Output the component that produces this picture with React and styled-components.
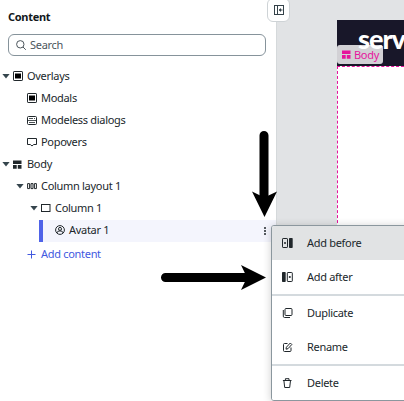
import React from 'react';
import styled, { createGlobalStyle, css } from 'styled-components';

const GlobalStyle = createGlobalStyle`
  * { box-sizing: border-box; }
  body { margin: 0; overflow: hidden; background: #fff; }
`;

const Screen = styled.div`
  position: relative;
  display: flex;
  width: 404px;
  height: 401px;
  overflow: hidden;
  background: #fff;
  color: #20272b;
  font: 11px/22px 'Noto Sans', sans-serif;
  letter-spacing: -0.3px;
`;

const Panel = styled.aside`
  width: 277px;
  flex: none;
  border-right: 1px solid #d5d9db;
`;

const Title = styled.h1`
  margin: 6px 0 0 8px;
  font-size: 11px;
  line-height: 22px;
  font-weight: 700;
  color: #12181b;
`;

const Search = styled.div`
  display: flex;
  align-items: center;
  gap: 4px;
  width: 258px;
  height: 22px;
  margin: 6px 0 10px 8px;
  padding-left: 7px;
  border: 1px solid #86939b;
  border-radius: 6px;
  color: #4c565c;
`;

const Row = styled.div`
  display: flex;
  align-items: center;
  height: 22px;
  padding-bottom: 2px;
  padding-left: ${(p) => p.$indent}px;
  white-space: pre;
  ${(p) => p.$selected && css`
    margin-left: 39px;
    border-left: 4px solid #4f63e8;
    background: #f4f5fd;
  `}
`;

const Caret = styled.span`
  width: 8px;
  height: 5px;
  margin-right: 3px;
  background: #35454d;
  clip-path: polygon(0 0, 100% 0, 50% 100%);
  visibility: ${(p) => (p.$hidden ? 'hidden' : 'visible')};
`;

const RowIcon = styled.span`
  display: flex;
  width: 10px;
  margin-right: 4px;
`;

const MoreDots = styled.span`
  display: flex;
  flex-direction: column;
  gap: 1px;
  margin: 2px 10px 0 auto;
`;

const Dot = styled.i`
  width: 2px;
  height: 2px;
  border-radius: 1px;
  background: #20272b;
`;

const AddContent = styled.div`
  display: flex;
  align-items: center;
  gap: 5px;
  height: 24px;
  padding-left: 27px;
  color: #4259df;
`;

const Canvas = styled.main`
  flex: 1;
  padding: 20px 0 0 60px;
  background: #e1e3e5;
`;

const Header = styled.header`
  position: relative;
  height: 46px;
  background: #181729;
`;

const Logo = styled.span`
  position: absolute;
  z-index: 1;
  left: 21px;
  top: 5px;
  font: 900 27px/28px Lato, sans-serif;
  letter-spacing: -1px;
  color: #fff;
`;

const Badge = styled.div`
  position: absolute;
  left: 0;
  bottom: 2px;
  display: flex;
  align-items: center;
  gap: 3px;
  width: 46px;
  height: 19px;
  padding-left: 5px;
  border-radius: 3px;
  background: #d2d1d5;
  color: #e6149d;
`;

const Page = styled.section`
  height: 336px;
  border-top: 1px dashed #e6149d;
  border-left: 1px dashed #e6149d;
  background: #fff;
`;

const Toggle = styled.button`
  position: absolute;
  left: 267px;
  top: -2px;
  display: grid;
  place-items: center;
  width: 23px;
  height: 24px;
  padding: 0;
  border: 1px solid #ced3d6;
  border-radius: 6px;
  background: #fff;
  color: #35434a;
`;

const Menu = styled.div`
  position: absolute;
  left: 271px;
  top: 225px;
  width: 150px;
  height: 176px;
  border: 1px solid #8b979e;
  border-radius: 3px;
  background: #fff;
  box-shadow: 0 1px 8px rgba(0, 0, 0, 0.2);
  overflow: hidden;
`;

const MenuItem = styled.div`
  display: flex;
  align-items: center;
  gap: 13px;
  height: 34px;
  padding-left: 10px;
  background: ${(p) => (p.$active ? '#e1e3e4' : '#fff')};
`;

const Divider = styled.hr`
  height: 2px;
  margin: 0;
  border: 0;
  background: #d4dade;
`;

const Arrows = styled.svg`
  position: absolute;
  inset: 0;
  pointer-events: none;
`;

const Svg = ({ w = 10, h = 10, children }) => (
  <svg width={w} height={h} viewBox={`0 0 ${w} ${h}`} fill="none" stroke="currentColor" strokeWidth="1">
    {children}
  </svg>
);

const ModalIcon = () => (
  <Svg><rect x=".5" y=".5" width="9" height="9" rx=".6" /><rect x="2" y="2.5" width="6" height="5" fill="#000" stroke="none" /></Svg>
);
const DialogIcon = () => (
  <Svg><rect x=".5" y="1.5" width="9" height="8" rx="1" /><path d="M2 3.5h4M7 3.5h1M1 5.5h8M2 7.5h6" strokeWidth=".8" /></Svg>
);
const PopoverIcon = () => (
  <Svg><path d="M.5 1.5h9v6H6.7L5 9 3.3 7.5H.5z" /></Svg>
);
const BodyIcon = () => (
  <Svg w={9} h={9}><path d="M0 .5h8.5v3.5H0zM0 5h3.7v3.7H0zM4.8 5h3.7v3.7H4.8z" fill="currentColor" stroke="none" /></Svg>
);
const LayoutIcon = () => (
  <Svg><path d="M.6 2.6h2v5h-2zM4 2.6h2v5H4zM7.4 2.6h2v5h-2z" /></Svg>
);
const ColumnIcon = () => <Svg><rect x=".5" y="1.5" width="8.5" height="7" /></Svg>;
const AvatarIcon = () => (
  <Svg><circle cx="5" cy="5" r="4.4" /><circle cx="5" cy="3.9" r="1.5" /><path d="M2.3 8.2V7.4Q2.5 6 4 6h2q1.5 0 1.7 1.4v.8" /></Svg>
);
const SearchIcon = () => (
  <Svg><circle cx="4.3" cy="4.3" r="3.7" /><path d="m7 7 2.8 2.8" /></Svg>
);
const BeforeIcon = () => (
  <Svg w={12} h={12}><rect x=".5" y="1.5" width="5" height="9" rx=".6" /><path d="M2 6h2M3 5v2" /><rect x="7" y="1" width="3.7" height="10" rx=".7" fill="currentColor" stroke="none" /></Svg>
);
const AfterIcon = () => (
  <Svg w={12} h={12}><rect x="0" y="1" width="3.7" height="10" rx=".7" fill="currentColor" stroke="none" /><rect x="5.3" y="1.5" width="5" height="9" rx=".6" /><path d="M6.8 6h2M7.8 5v2" /></Svg>
);
const CopyIcon = () => (
  <Svg w={12} h={12}><rect x="3" y="1.5" width="7" height="7" rx="1" /><path d="M1.3 3v6.2q0 1.3 1.3 1.3H8" /></Svg>
);
const EditIcon = () => (
  <Svg w={12} h={12}><path d="M5.5 2.5h-3q-1 0-1 1v6q0 1 1 1h5.5q1 0 1-1V6.5M4 8.2l.4-2L8.3 2l1.5 1.5L6 7.7z" /></Svg>
);
const TrashIcon = () => (
  <Svg w={12} h={12}><path d="M.9 3.5h8.6M3.4 3.3V1.7H7v1.6M1.9 3.5l.8 7h5l.8-7" /></Svg>
);
const CollapseIcon = () => (
  <Svg><rect x=".5" y=".5" width="9" height="9" /><path d="M3.5.5v9M5 5h3.5" /><path d="M7 3v4L4.8 5z" fill="currentColor" stroke="none" /></Svg>
);

const tree = [
  { label: 'Overlays', indent: 2, Icon: ModalIcon, open: true },
  { label: 'Modals', indent: 16, Icon: ModalIcon },
  { label: 'Modeless dialogs', indent: 16, Icon: DialogIcon },
  { label: 'Popovers', indent: 16, Icon: PopoverIcon },
  { label: 'Body', indent: 2, Icon: BodyIcon, open: true },
  { label: 'Column layout 1', indent: 16, Icon: LayoutIcon, open: true },
  { label: 'Column 1', indent: 30, Icon: ColumnIcon, open: true },
  { label: 'Avatar 1', indent: 1, Icon: AvatarIcon, selected: true },
];

export default function App() {
  return (
    <>
      <GlobalStyle />
      <Screen>
        <Panel>
          <Title>Content</Title>
          <Search><SearchIcon />Search</Search>
          {tree.map(({ label, indent, Icon, open, selected }) => (
            <Row key={label} $indent={indent} $selected={selected}>
              <Caret $hidden={!open} />
              <RowIcon><Icon /></RowIcon>
              {label}
              {selected && <MoreDots><Dot /><Dot /><Dot /></MoreDots>}
            </Row>
          ))}
          <AddContent>
            <Svg w={9} h={9}><path d="M4.5 .5v8M.5 4.5h8" /></Svg>
            Add content
          </AddContent>
        </Panel>
        <Canvas>
          <Header>
            <Logo>serv</Logo>
            <Badge><BodyIcon />Body</Badge>
          </Header>
          <Page />
        </Canvas>
        <Toggle aria-label="Collapse panel"><CollapseIcon /></Toggle>
        <Menu>
          <MenuItem $active><BeforeIcon />Add before</MenuItem>
          <MenuItem><AfterIcon />Add after</MenuItem>
          <Divider />
          <MenuItem><CopyIcon />Duplicate</MenuItem>
          <MenuItem><EditIcon />Rename</MenuItem>
          <Divider />
          <MenuItem><TrashIcon />Delete</MenuItem>
        </Menu>
        <Arrows width="404" height="401" viewBox="0 0 404 401">
          <path d="M264 135.5V200M165.5 277.5H249" stroke="#000" strokeWidth="9" strokeLinecap="round" />
          <path d="M264.5 217 252 191.5l12.3 6 12.7-6zM266 277.5 241 265l6 12.5-6 12.5z" />
        </Arrows>
      </Screen>
    </>
  );
}
